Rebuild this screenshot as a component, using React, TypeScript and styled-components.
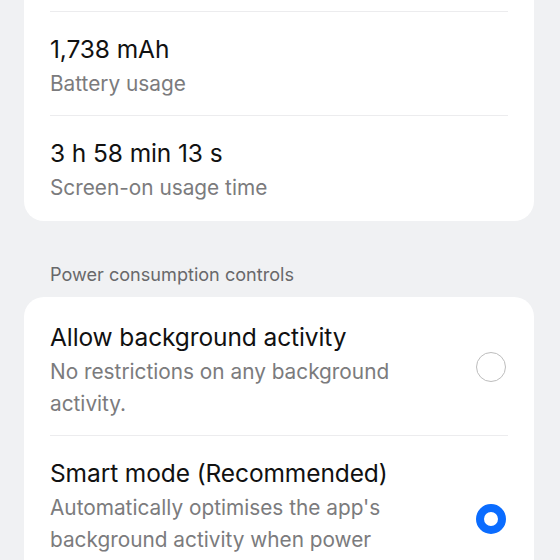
import React from 'react';
import styled, { createGlobalStyle } from 'styled-components';

const GlobalStyle = createGlobalStyle`
  html, body {
    margin: 0;
    padding: 0;
    background: #f0f1f3;
  }
  body {
    font-family: Inter, "Noto Sans", "Liberation Sans", sans-serif;
    -webkit-font-smoothing: antialiased;
  }
`;

const Screen = styled.div`
  width: 560px;
  height: 560px;
  overflow: hidden;
  background: #f0f1f3;
`;

// the page is scrolled: the first card starts above the viewport
const Scroller = styled.div`
  margin-top: -95px;
  padding: 0 26px 0 24px;
`;

const Card = styled.div`
  background: #ffffff;
  border-radius: 20px;
  padding: 3px 26px 2px;
`;

const Row = styled.div<{ $divider?: boolean }>`
  display: flex;
  align-items: center;
  gap: 24px;
  padding: 20px 0 15px;
  border-top: ${({ $divider }) => ($divider ? '1px solid #ececee' : 'none')};
`;

const Texts = styled.div`
  flex: 1;
  min-width: 0;
`;

const Title = styled.div`
  font-size: 24.5px;
  line-height: 34px;
  color: #111111;
  letter-spacing: -0.1px;
`;

const Subtitle = styled.div`
  margin-top: 2px;
  font-size: 20.8px;
  line-height: 32px;
  color: #7b7b7d;
  max-width: 350px;
`;

const SectionHeader = styled.div`
  padding: 40px 26px 10px;
  font-size: 18.1px;
  line-height: 26px;
  color: #68686a;
`;

const Radio = styled.span<{ $checked?: boolean }>`
  flex: none;
  box-sizing: border-box;
  width: 30px;
  height: 30px;
  border-radius: 50%;
  margin: -6px 2px 0 0;
  border: ${({ $checked }) => ($checked ? '8.5px solid #0a6cff' : '1.6px solid #bdbdbd')};
  background: #ffffff;
`;

type Item = { title: string; subtitle: string; radio?: 'on' | 'off' };

const usage: Item[] = [
  { title: '4 h 12 min', subtitle: 'Background usage time' },
  { title: '1,738 mAh', subtitle: 'Battery usage' },
  { title: '3 h 58 min 13 s', subtitle: 'Screen-on usage time' },
];

const controls: Item[] = [
  {
    title: 'Allow background activity',
    subtitle: 'No restrictions on any background activity.',
    radio: 'off',
  },
  {
    title: 'Smart mode (Recommended)',
    subtitle: "Automatically optimises the app's background activity when power consumption is high.",
    radio: 'on',
  },
];

function List({ items }: { items: Item[] }) {
  return (
    <Card>
      {items.map((item, i) => (
        <Row key={item.title} $divider={i > 0}>
          <Texts>
            <Title>{item.title}</Title>
            <Subtitle>{item.subtitle}</Subtitle>
          </Texts>
          {item.radio && <Radio $checked={item.radio === 'on'} />}
        </Row>
      ))}
    </Card>
  );
}

export default function App() {
  return (
    <Screen>
      <GlobalStyle />
      <Scroller>
        <List items={usage} />
        <SectionHeader>Power consumption controls</SectionHeader>
        <List items={controls} />
      </Scroller>
    </Screen>
  );
}
